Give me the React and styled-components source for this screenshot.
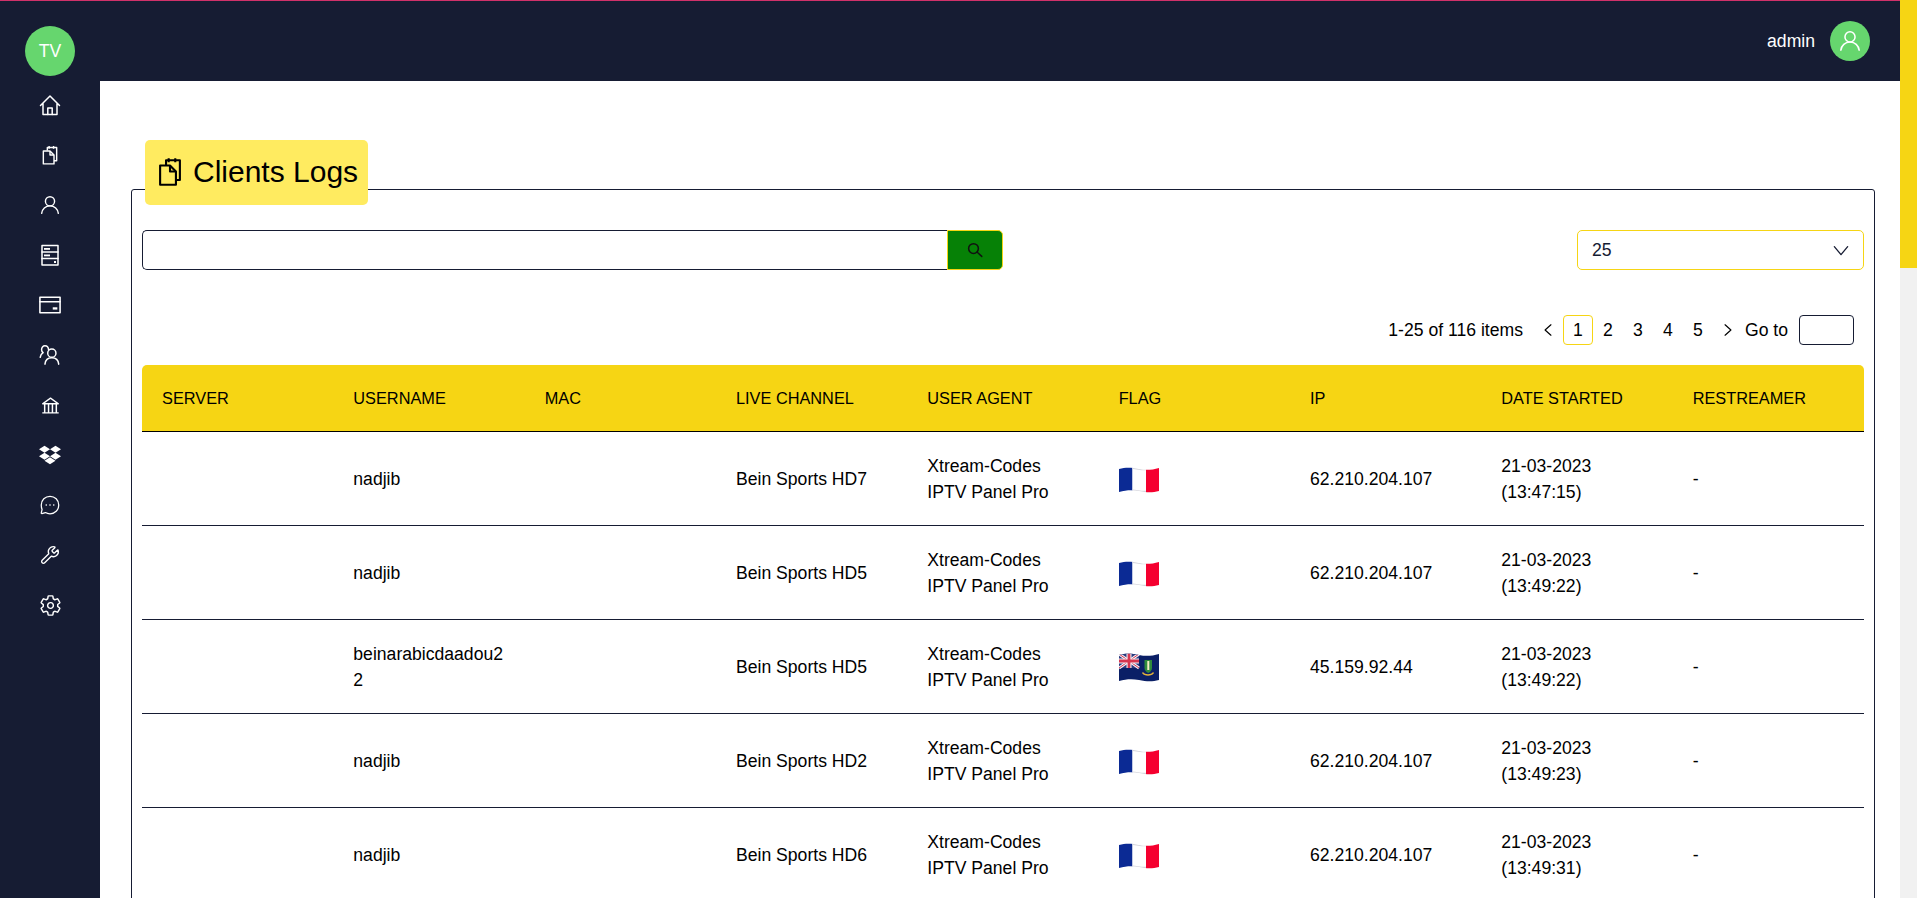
import React from 'react';
import styled, { createGlobalStyle } from 'styled-components';
import { FaDropbox } from 'react-icons/fa';
import { AiOutlineBank } from 'react-icons/ai';
import { IoSettingsOutline } from 'react-icons/io5';
import { Wrench } from 'lucide-react';

const Global = createGlobalStyle`
    * { box-sizing: border-box; }
    body {
        margin: 0;
        background: #fff;
        color: #000;
        font-family: "Liberation Sans", Arial, sans-serif;
        font-size: 17.6px;
        line-height: 1.5;
    }
`;

const rows = [
    { user: 'nadjib', channel: 'Bein Sports HD7', flag: 'fr', ip: '62.210.204.107', time: '(13:47:15)' },
    { user: 'nadjib', channel: 'Bein Sports HD5', flag: 'fr', ip: '62.210.204.107', time: '(13:49:22)' },
    { user: 'beinarabicdaadou22', channel: 'Bein Sports HD5', flag: 'vg', ip: '45.159.92.44', time: '(13:49:22)' },
    { user: 'nadjib', channel: 'Bein Sports HD2', flag: 'fr', ip: '62.210.204.107', time: '(13:49:23)' },
    { user: 'nadjib', channel: 'Bein Sports HD6', flag: 'fr', ip: '62.210.204.107', time: '(13:49:31)' },
];

const columns = ['SERVER', 'USERNAME', 'MAC', 'LIVE CHANNEL', 'USER AGENT', 'FLAG', 'IP', 'DATE STARTED', 'RESTREAMER'];

const Line = ({ size = 24, children, width = 1.5 }) => (
    <svg width={size} height={size} viewBox="0 0 24 24" fill="none" stroke="currentColor" strokeWidth={width} strokeLinejoin="round" strokeLinecap="round">
        {children}
    </svg>
);

const HomeIcon = () => (
    <Line>
        <path d="M2.500 12.500 12 3l9.500 9.500M5 10.500V21.500h14V10.500" />
        <path d="M9.800 21.500v-6.500h4.400v6.500" />
    </Line>
);

const FilesIcon = ({ w = 16, h = 20 }) => (
    <svg width={w} height={h} viewBox="3 1 18 22" fill="none" stroke="currentColor" strokeWidth="1.600" strokeLinejoin="round">
        <path d="M9 7V3.500h10.500V18.500H16.500" />
        <path d="M11 2v3M16 2v3" />
        <path d="M4.500 7.500h7.500l4.500 4.500v10H4.500z" />
        <path d="M12 7.500V12h4.500" />
    </svg>
);

const UserIcon = ({ size = 20 }) => (
    <Line size={size} width={1.700}>
        <circle cx="12" cy="7.500" r="5.500" />
        <path d="M2 22c.6-5 4.600-9 10-9s9.400 4 10 9" />
    </Line>
);

const ServerIcon = () => (
    <Line width={1.500}>
        <rect x="4" y="2.500" width="16" height="19.500" />
        <path d="M4 9h16M4 15.500h16" />
        <rect x="6" y="5" width="6" height="1.800" fill="currentColor" stroke="none" />
        <rect x="6" y="11.500" width="6" height="1.800" fill="currentColor" stroke="none" />
        <rect x="16" y="18" width="2" height="2" fill="currentColor" stroke="none" />
    </Line>
);

const CardIcon = () => (
    <Line size={22} width={1.700}>
        <rect x="1" y="3.500" width="22" height="17" />
        <path d="M1 8.500h22" />
        <rect x="15" y="14.500" width="5" height="2.500" fill="currentColor" stroke="none" />
    </Line>
);

const UsersIcon = () => (
    <Line size={22} width={1.600}>
        <circle cx="14" cy="10" r="4.500" />
        <path d="M6.500 22c.4-4.200 3.400-7 7.500-7s7.100 2.800 7.500 7" />
        <path d="M10.500 6.500C10.300 3.800 8.800 2 6.500 2 4.200 2 2.800 3.800 2.800 6c0 1.500.6 2.700 1.700 3.500-1.700 1-2.900 2.800-3.200 5" />
    </Line>
);

const ChatIcon = () => (
    <Line size={20} width={1.500}>
        <path d="M12 1.500c5.800 0 10.500 4.600 10.500 10.500S17.800 22.500 12 22.500c-2.200 0-4-.5-5.500-1.400l-4.200 1.200a.7.7 0 0 1-.8-.9l1-4C1.900 16 1.500 14 1.500 12 1.500 6.100 6.200 1.500 12 1.500z" />
        <path d="M7.500 12h.01M12 12h.01M16.500 12h.01" strokeWidth="2" />
    </Line>
);

const SearchIcon = () => (
    <Line size={18} width={2}>
        <circle cx="10" cy="10" r="6.500" />
        <path d="m15 15 6 5.500" />
    </Line>
);

const Chevron = ({ dir }) => (
    <Line size={dir === 'down' ? 16 : 14} width={2}>
        {dir === 'down' && <path d="M2 7l10 12L22 7" />}
        {dir === 'left' && <path d="M17 3 7 12l10 9" />}
        {dir === 'right' && <path d="m7 3 10 9-10 9" />}
    </Line>
);

const France = () => (
    <svg width="42" height="32" viewBox="0 0 42 32">
        <defs>
            <clipPath id="wave-fr">
                <path d="M1 6c7-2 13-1.500 20 0s13 1 20-1v23c-7 2-13 1.500-20 0S8 27 1 29z" />
            </clipPath>
        </defs>
        <g clipPath="url(#wave-fr)">
            <rect x="0" y="0" width="14.500" height="32" fill="#0b2a94" />
            <rect x="14.500" y="0" width="13.500" height="32" fill="#fff" />
            <rect x="28" y="0" width="14" height="32" fill="#f5002f" />
            <path d="M14.500 5.300c4.500.1 9 1.700 13.500 1.200" stroke="#d5d5dc" strokeWidth="1.500" fill="none" />
            <path d="M14.500 27.300c4.500.1 9 1.700 13.500 1.200" stroke="#d5d5dc" strokeWidth="1.500" fill="none" />
        </g>
    </svg>
);

const VirginIslands = () => (
    <svg width="42" height="32" viewBox="0 0 42 32">
        <defs>
            <clipPath id="wave-vg">
                <path d="M1 4c7-2 13-1.500 20 0s13 1 20-1v26c-7 2-13 1.500-20 0S8 28 1 30z" />
            </clipPath>
        </defs>
        <g clipPath="url(#wave-vg)">
            <rect width="42" height="32" fill="#0a1f66" />
            <rect x="1" y="2" width="20" height="15" fill="#2b3a7e" />
            <path d="M1 3l20 14M21 3 1 17" stroke="#f3f0f4" strokeWidth="3" />
            <path d="M1 3l20 14M21 3 1 17" stroke="#d6354f" strokeWidth="1" />
            <path d="M11 2v15M1 10h20" stroke="#f3f0f4" strokeWidth="5" />
            <path d="M11 2v15M1 10h20" stroke="#d6354f" strokeWidth="2.800" />
            <path d="M26.500 9h7.500v8c0 2.500-2 4-3.700 5-1.800-1-3.800-2.500-3.800-5z" fill="#2f8a3c" />
            <rect x="29.300" y="10" width="2" height="9" fill="#f4ecc4" />
            <path d="M25 21c2 3 8 3 10 0l1 1c-2 3.500-10 3.500-12 0z" fill="#e3b23a" />
        </g>
    </svg>
);

const App = () => {
    return (
        <>
            <Global />
            <Page>
                <Shell>
                    <Sidebar>
                        <Logo>TV</Logo>
                        <NavItem><HomeIcon /></NavItem>
                        <NavItem><FilesIcon /></NavItem>
                        <NavItem><UserIcon /></NavItem>
                        <NavItem><ServerIcon /></NavItem>
                        <NavItem><CardIcon /></NavItem>
                        <NavItem><UsersIcon /></NavItem>
                        <NavItem><AiOutlineBank size={21} /></NavItem>
                        <NavItem><FaDropbox size={22} /></NavItem>
                        <NavItem><ChatIcon /></NavItem>
                        <NavItem><Wrench size={20} strokeWidth={1.600} /></NavItem>
                        <NavItem><IoSettingsOutline size={23} /></NavItem>
                    </Sidebar>
                    <Content>
                        <TopBar>
                            <span>admin</span>
                            <Avatar><UserIcon size={22} /></Avatar>
                        </TopBar>
                        <Panel>
                            <TitleTag>
                                <FilesIcon w={24} h={29} />
                                <span>Clients Logs</span>
                            </TitleTag>
                            <Filters>
                                <SearchGroup>
                                    <SearchInput />
                                    <SearchButton><SearchIcon /></SearchButton>
                                </SearchGroup>
                                <PageSize>
                                    25
                                    <Chevron dir="down" />
                                </PageSize>
                            </Filters>
                            <Pagination>
                                <Total>1-25 of 116 items</Total>
                                <Arrow><Chevron dir="left" /></Arrow>
                                <PageNum $active>1</PageNum>
                                <PageNum>2</PageNum>
                                <PageNum>3</PageNum>
                                <PageNum>4</PageNum>
                                <PageNum>5</PageNum>
                                <Arrow><Chevron dir="right" /></Arrow>
                                <GoTo>Go to</GoTo>
                                <GoToInput />
                            </Pagination>
                            <Table>
                                <thead>
                                    <tr>
                                        {columns.map((c) => <Th key={c}>{c}</Th>)}
                                    </tr>
                                </thead>
                                <tbody>
                                    {rows.map((r, i) => (
                                        <tr key={i}>
                                            <Td />
                                            <Td>{r.user}</Td>
                                            <Td />
                                            <Td>{r.channel}</Td>
                                            <Td>Xtream-Codes IPTV Panel Pro</Td>
                                            <Td><FlagBox>{r.flag === 'fr' ? <France /> : <VirginIslands />}</FlagBox></Td>
                                            <Td>{r.ip}</Td>
                                            <Td>21-03-2023 {r.time}</Td>
                                            <Td>-</Td>
                                        </tr>
                                    ))}
                                </tbody>
                            </Table>
                        </Panel>
                    </Content>
                </Shell>
                <ScrollRail><ScrollThumb /></ScrollRail>
            </Page>
        </>
    );
};

const Page = styled.div`
    display: flex;
    height: 100vh;
    overflow: hidden;
`;

const Shell = styled.div`
    flex: 1;
    min-width: 0;
    display: flex;
    border-top: 1px solid #d0316a;
`;

const ScrollRail = styled.div`
    flex: 0 0 17px;
    background: #f1f1f1;
`;

const ScrollThumb = styled.div`
    height: 268px;
    background: #f6d514;
`;

const Sidebar = styled.aside`
    flex: 0 0 100px;
    background: #161c33;
    color: #fff;
    display: flex;
    flex-direction: column;
    align-items: center;
    padding-top: 25px;
`;

const Logo = styled.div`
    width: 50px;
    height: 50px;
    border-radius: 50%;
    background: #66d66e;
    color: #fff;
    font-size: 17.6px;
    display: flex;
    align-items: center;
    justify-content: center;
    margin-bottom: 4px;
`;

const NavItem = styled.div`
    width: 100%;
    height: 50px;
    display: flex;
    align-items: center;
    justify-content: center;
    flex: none;
`;

const Content = styled.main`
    flex: 1;
    min-width: 0;
`;

const TopBar = styled.header`
    height: 80px;
    background: #161c33;
    color: #fff;
    display: flex;
    align-items: center;
    justify-content: flex-end;
    gap: 15px;
    padding-right: 30px;
`;

const Panel = styled.section`
    margin: 108px 25px 0 31px;
    border: 1px solid #161c33;
    border-radius: 3px;
    padding: 0 10px 0 10px;
`;

const Avatar = styled.div`
    width: 40px;
    height: 40px;
    border-radius: 50%;
    background: #66d66e;
    display: flex;
    align-items: center;
    justify-content: center;
`;

const TitleTag = styled.h2`
    display: flex;
    align-items: center;
    gap: 11px;
    width: 223px;
    height: 65px;
    margin: -50px 0 0 3px;
    padding: 0 0 2px 13px;
    background: #ffeb60;
    border-radius: 5px;
    font-size: 30px;
    font-weight: 400;
`;

const Filters = styled.div`
    display: flex;
    justify-content: space-between;
    margin-top: 25px;
`;

const SearchGroup = styled.div`
    display: flex;
    height: 40px;
`;

const SearchInput = styled.input`
    width: 805px;
    height: 40px;
    border: 1px solid #161c33;
    border-right: none;
    border-radius: 5px 0 0 5px;
    outline: none;
    background: #fff;
`;

const SearchButton = styled.button`
    width: 56px;
    height: 40px;
    padding: 0;
    border: 1px solid #f6d514;
    border-radius: 0 5px 5px 0;
    background: #068106;
    color: #111;
    display: flex;
    align-items: center;
    justify-content: center;
`;

const PageSize = styled.div`
    width: 287px;
    height: 40px;
    border: 1px solid #f6d514;
    border-radius: 5px;
    padding: 0 14px;
    display: flex;
    align-items: center;
    justify-content: space-between;
    color: #161c33;
`;

const Pagination = styled.div`
    display: flex;
    align-items: center;
    justify-content: flex-end;
    height: 30px;
    margin: 45px 10px 20px 0;
`;

const Total = styled.span`
    margin-right: 10px;
`;

const Arrow = styled.span`
    width: 30px;
    height: 26px;
    display: flex;
    align-items: center;
    justify-content: center;
`;

const PageNum = styled.span`
    width: 30px;
    height: 30px;
    display: flex;
    align-items: center;
    justify-content: center;
    border-radius: 4px;
    border: 1px solid ${(p) => (p.$active ? '#f6d514' : 'transparent')};
`;

const GoTo = styled.span`
    margin-left: 2px;
`;

const GoToInput = styled.input`
    width: 55px;
    height: 30px;
    margin-left: 11px;
    border: 1px solid #161c33;
    border-radius: 4px;
    outline: none;
    background: #fff;
`;

const Table = styled.table`
    width: 100%;
    table-layout: fixed;
    border-collapse: separate;
    border-spacing: 0;
`;

const Th = styled.th`
    background: #f6d514;
    font-weight: 400;
    text-align: left;
    padding: 20px;
    border-bottom: 1px solid #000;
    font-size: 16.32px;
    line-height: 26.4px;

    &:first-child { border-top-left-radius: 5px; }
    &:last-child { border-top-right-radius: 5px; }
`;

const Td = styled.td`
    padding: 20px;
    height: 94px;
    border-bottom: 1px solid #161c33;
    overflow-wrap: anywhere;
    vertical-align: middle;
`;

const FlagBox = styled.div`
    display: flex;
    align-items: center;
    margin-left: -1px;
`;

export default App;
